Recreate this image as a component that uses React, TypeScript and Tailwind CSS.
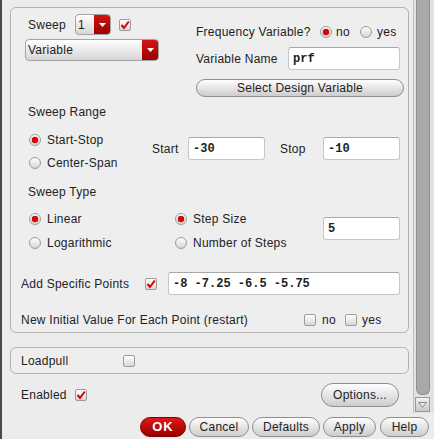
import React from 'react'

const font = { fontFamily: '"Liberation Sans", Arial, sans-serif' }

function Radio({ on }: { on?: boolean }) {
  return (
    <span className="w-[12px] h-[12px] shrink-0 rounded-full border border-[#9c9c9c] bg-gradient-to-b from-white to-[#d4d4d4] flex items-center justify-center">
      {on && <span className="w-[6px] h-[6px] rounded-full bg-[#e00000] shadow-[0_0_1px_#700]" />}
    </span>
  )
}

function Check({ on }: { on?: boolean }) {
  return (
    <span className="w-[12px] h-[12px] shrink-0 rounded-[2px] border border-[#9c9c9c] bg-gradient-to-b from-white to-[#d8d8d8] flex items-center justify-center">
      {on && (
        <svg width="10" height="10" viewBox="0 0 10 10">
          <path d="M1.5 5 L4 8 L8.8 1.5" fill="none" stroke="#d40000" strokeWidth="2" />
        </svg>
      )}
    </span>
  )
}

function Dropdown({ label, className }: { label: string; className: string }) {
  return (
    <div className={`flex rounded-[4px] border border-[#a4a4a4] overflow-hidden bg-gradient-to-b from-white to-[#d6d6d6] ${className}`}>
      <span className="flex-1 pl-[2px] text-[12px] leading-none flex items-center text-[#1c1c1c]">{label}</span>
      <span className="w-[16px] bg-gradient-to-b from-[#d41414] to-[#9c0000] flex items-center justify-center">
        <svg width="7" height="4" viewBox="0 0 7 4">
          <path d="M0 0 L7 0 L3.5 4 Z" fill="#fff" />
        </svg>
      </span>
    </div>
  )
}

function Pill({ children, className }: { children: React.ReactNode; className: string }) {
  return (
    <div className={`rounded-full border border-[#8e8e8e] bg-gradient-to-b from-[#fefefe] to-[#cdcdcd] text-[12px] text-[#222] flex items-center justify-center ${className}`}>
      {children}
    </div>
  )
}

function Field({ value, className }: { value: string; className: string }) {
  return (
    <div
      className={`h-[23px] bg-white rounded-[3px] border border-[#c6c6c6] border-t-[#a8a8a8] pl-[4px] flex items-center text-[12px] font-bold tracking-normal text-[#222] ${className}`}
      style={{ fontFamily: '"Liberation Mono", "Courier New", monospace' }}
    >
      {value}
    </div>
  )
}

export default function App() {
  return (
    <div className="w-[434px] h-[439px] flex bg-[#ececec] text-[#222] tracking-[0.25px] overflow-hidden" style={font}>
      <div className="w-[2px] bg-[#4a4a4a]" />
      <div className="flex-1 flex flex-col">
        <div className="h-[413px] flex">
          <div className="flex-1">
            {/* Sweep panel */}
            <div className="mt-[7px] ml-[8px] w-[399px] h-[326px] rounded-[6px] border border-[#b2b2b2] bg-[#eeeeee]">
              <div className="flex pt-[6px]">
                <div className="w-[185px] pl-[14px]">
                  <div className="flex items-center h-[21px]">
                    <span className="w-[50px] pl-[3px] text-[12px]">Sweep</span>
                    <Dropdown label="1" className="w-[36px] h-[21px]" />
                    <span className="ml-[8px]"><Check on /></span>
                  </div>
                  <Dropdown label="Variable" className="mt-[4px] w-[134px] h-[22px]" />
                </div>
                <div className="flex-1">
                  <div className="mt-[11px] h-[14px] flex items-center text-[12px]">
                    <span className="w-[124px]">Frequency Variable?</span>
                    <Radio on />
                    <span className="ml-[4px] w-[24px]">no</span>
                    <Radio />
                    <span className="ml-[5px]">yes</span>
                  </div>
                  <div className="mt-[8px] h-[23px] flex items-center text-[12px]">
                    <span className="w-[92px]">Variable Name</span>
                    <Field value="prf" className="w-[112px]" />
                  </div>
                  <Pill className="mt-[9px] h-[18px] w-[208px]">Select Design Variable</Pill>
                </div>
              </div>

              <div className="mt-[8px] h-[14px] leading-[14px] pl-[17px] text-[12px]">Sweep Range</div>
              <div className="mt-[14px] flex text-[12px]">
                <div className="w-[141px] pl-[18px]">
                  <div className="h-[14px] flex items-center"><Radio on /><span className="ml-[6px]">Start-Stop</span></div>
                  <div className="mt-[9px] h-[14px] flex items-center"><Radio /><span className="ml-[6px]">Center-Span</span></div>
                </div>
                <div className="mt-[4px] h-[23px] flex items-center">
                  <span className="w-[36px]">Start</span>
                  <Field value="-30" className="w-[77px]" />
                  <span className="ml-[15px] w-[43px]">Stop</span>
                  <Field value="-10" className="w-[77px]" />
                </div>
              </div>

              <div className="mt-[15px] h-[14px] leading-[14px] pl-[17px] text-[12px]">Sweep Type</div>
              <div className="mt-[13px] flex text-[12px]">
                <div className="w-[164px] pl-[18px]">
                  <div className="h-[14px] flex items-center"><Radio on /><span className="ml-[6px]">Linear</span></div>
                  <div className="mt-[10px] h-[14px] flex items-center"><Radio /><span className="ml-[6px]">Logarithmic</span></div>
                </div>
                <div className="w-[148px]">
                  <div className="h-[14px] flex items-center"><Radio on /><span className="ml-[6px]">Step Size</span></div>
                  <div className="mt-[10px] h-[14px] flex items-center"><Radio /><span className="ml-[6px]">Number of Steps</span></div>
                </div>
                <Field value="5" className="mt-[5px] w-[77px]" />
              </div>

              <div className="mt-[22px] h-[23px] pl-[10px] flex items-center text-[12px]">
                <span className="w-[124px]">Add Specific Points</span>
                <Check on />
                <Field value="-8 -7.25 -6.5 -5.75" className="ml-[11px] w-[232px]" />
              </div>
              <div className="mt-[18px] h-[14px] pl-[10px] flex items-center text-[12px]">
                <span className="w-[283px]">New Initial Value For Each Point (restart)</span>
                <Check />
                <span className="ml-[6px] w-[23px]">no</span>
                <Check />
                <span className="ml-[5px]">yes</span>
              </div>
            </div>

            {/* Loadpull panel */}
            <div className="mt-[14px] ml-[8px] w-[399px] h-[27px] rounded-[6px] border border-[#b2b2b2] bg-[#eeeeee] pl-[10px] flex items-center text-[12px]">
              <span className="w-[102px]">Loadpull</span>
              <Check />
            </div>

            <div className="mt-[9px] ml-[8px] w-[389px] h-[24px] pl-[11px] flex items-center text-[12px]">
              <span className="w-[54px]">Enabled</span>
              <Check on />
              <Pill className="ml-auto w-[78px] h-[24px]">Options...</Pill>
            </div>
          </div>

          {/* Scrollbar */}
          <div className="w-[21px] border-l border-[#c0c0c0] bg-[#e2e2e2]">
            <div className="ml-[2px] w-[14px] h-[395px] rounded-b-[6px] bg-[#a9a9a9] border-x border-b border-[#8f8f8f]" />
            <div className="mt-[2px] ml-[1px] w-[15px] h-[15px] border border-[#9a9a9a] bg-gradient-to-b from-[#f2f2f2] to-[#c8c8c8] flex items-center justify-center">
              <svg width="9" height="6" viewBox="0 0 9 6">
                <path d="M0.5 0.5 L8.5 0.5 L4.5 5.5 Z" fill="#e8e8e8" stroke="#8a8a8a" strokeWidth="1" />
              </svg>
            </div>
          </div>
        </div>

        {/* Bottom buttons */}
        <div className="pt-[4px] pl-[138px] flex items-center">
          <div className="w-[46px] h-[20px] rounded-full border border-[#7a0000] bg-gradient-to-b from-[#e01818] to-[#980000] text-white font-bold text-[13px] tracking-[1px] flex items-center justify-center">OK</div>
          <Pill className="ml-[3px] w-[60px] h-[20px]">Cancel</Pill>
          <Pill className="ml-[3px] w-[68px] h-[20px]">Defaults</Pill>
          <Pill className="ml-[3px] w-[53px] h-[20px]">Apply</Pill>
          <Pill className="ml-[4px] w-[49px] h-[20px]">Help</Pill>
        </div>
      </div>
    </div>
  )
}
